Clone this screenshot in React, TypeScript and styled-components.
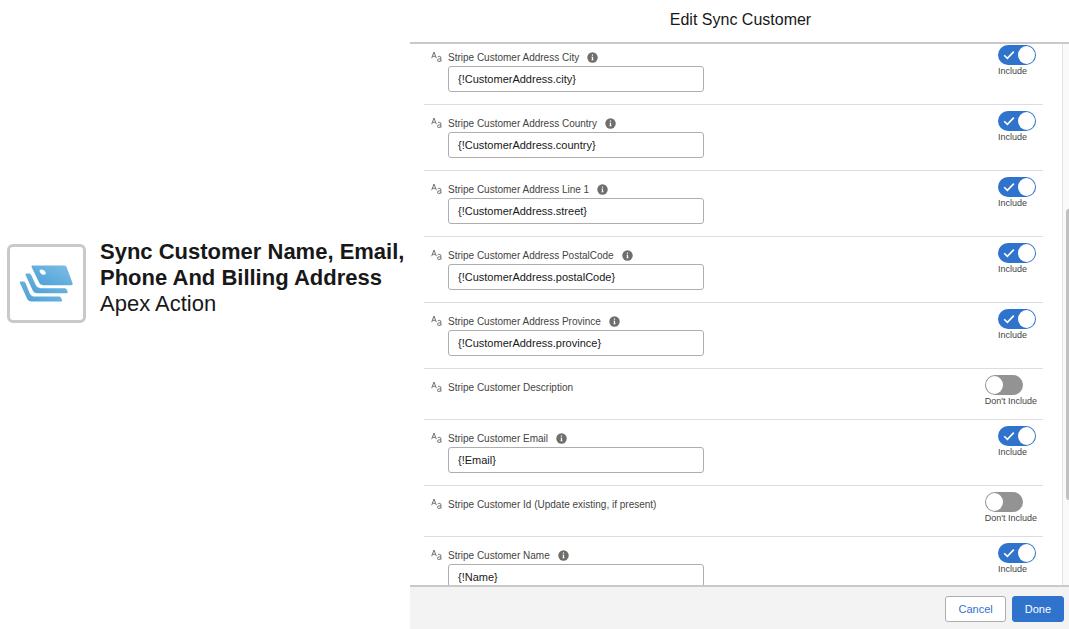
import React from "react";
import styled, { createGlobalStyle } from "styled-components";

const GlobalStyle = createGlobalStyle`
  *, *::before, *::after { box-sizing: border-box; }
  body {
    margin: 0;
    background: #ffffff;
    color: #181818;
    font-family: "Liberation Sans", Arial, sans-serif;
  }
`;

const Page = styled.div`
  display: grid;
  grid-template-columns: minmax(0, 410fr) minmax(0, 659fr);
  height: 100vh;
`;

const Summary = styled.aside`
  display: flex;
  align-items: center;
  gap: 14px;
  padding: 0 0 62px 7px;
`;

const ActionIcon = styled.div`
  display: flex;
  flex: none;
  align-items: center;
  justify-content: center;
  width: 79px;
  height: 79px;
  border: 3px solid #c9c9c9;
  border-radius: 6px;
`;

const SummaryText = styled.div`
  padding-bottom: 12px;
  font-size: 22px;
  line-height: 26px;
  white-space: nowrap;
`;

const ActionName = styled.h1`
  margin: 0;
  font-size: inherit;
  font-weight: 700;
`;

const ActionKind = styled.p`
  margin: 0;
`;

const Panel = styled.section`
  display: flex;
  flex-direction: column;
  min-height: 0;
`;

const PanelHeader = styled.header`
  flex: none;
  padding: 10px 0 12px;
  border-bottom: 2px solid #c9c9c9;
  text-align: center;
`;

const PanelTitle = styled.h2`
  margin: 0;
  padding-left: 2px;
  font-size: 16px;
  font-weight: 400;
  line-height: 20px;
`;

const PanelBody = styled.div`
  display: flex;
  flex: 1;
  min-height: 0;
  overflow: hidden;
`;

const ParameterList = styled.ul`
  flex: 1;
  min-width: 0;
  margin: 0;
  padding: 0 19px 0 14px;
  list-style: none;
`;

const Row = styled.li`
  display: flex;
  align-items: flex-start;
  justify-content: space-between;
  padding: 6px 6px 12px 7px;
  border-bottom: 1px solid #dddddd;

  &:first-child {
    padding-top: 1px;
  }
`;

const Field = styled.div`
  display: grid;
  grid-template-columns: 17px 256px;
  padding-top: 4px;
`;

const LabelLine = styled.div`
  display: flex;
  align-items: center;
  gap: 8px;
  height: 17px;
  color: #444444;
  font-size: 10px;
  line-height: 16px;
  white-space: nowrap;
`;

const TextInput = styled.input`
  grid-column: 2;
  width: 100%;
  height: 26px;
  padding: 0 9px;
  border: 1px solid #aeaeae;
  border-radius: 3px;
  background: #ffffff;
  color: #181818;
  font-family: inherit;
  font-size: 11px;
`;

const ToggleLabel = styled.label`
  display: flex;
  flex-direction: column;
  min-width: 39px;
  color: #444444;
  font-size: 9px;
  line-height: 12px;
  white-space: nowrap;
`;

const ToggleTrack = styled.span`
  position: relative;
  width: 38px;
  height: 20px;
`;

const ToggleInput = styled.input`
  display: flex;
  align-items: center;
  appearance: none;
  width: 38px;
  height: 20px;
  margin: 0;
  padding: 0 1px;
  border-radius: 10px;
  background: #939393;
  cursor: pointer;

  &::before {
    content: "";
    width: 17px;
    height: 18px;
    border-radius: 50%;
    background: #ffffff;
  }

  &:checked {
    justify-content: flex-end;
    background: #2f73cd;
  }

  & + svg {
    display: none;
  }

  &:checked + svg {
    display: block;
  }
`;

const CheckMark = styled.svg`
  position: absolute;
  top: 5px;
  left: 5px;
  pointer-events: none;
`;

const ScrollTrack = styled.div`
  display: grid;
  flex: none;
  grid-template-rows: 165fr 292fr 85fr;
  width: 7px;
  padding-left: 3px;
  border-left: 1px solid #e4e4e4;
  background: #fafafa;
`;

const ScrollThumb = styled.div`
  grid-row: 2;
  border-radius: 3px 0 0 3px;
  background: #c1c1c1;
`;

const PanelFooter = styled.footer`
  display: flex;
  flex: none;
  justify-content: flex-end;
  gap: 6px;
  padding: 9px 5px 7px;
  border-top: 2px solid #c9c9c9;
  background: #f3f3f3;
`;

const Button = styled.button<{ $primary?: boolean }>`
  height: 26px;
  padding: 0 12px;
  border: 1px solid ${(p) => (p.$primary ? "#2f73cd" : "#aeaeae")};
  border-radius: 3px;
  background: ${(p) => (p.$primary ? "#2f73cd" : "#ffffff")};
  color: ${(p) => (p.$primary ? "#ffffff" : "#2f73cd")};
  font-family: inherit;
  font-size: 11px;
  cursor: pointer;
`;

function CardsLogo() {
  return (
    <svg width="53" height="37" viewBox="61 104 159 110" aria-hidden="true">
      <defs>
        <linearGradient id="cards" x1="0" y1="1" x2="1" y2="0">
          <stop offset="0" stopColor="#4a9fd8" />
          <stop offset="1" stopColor="#80bfe4" />
        </linearGradient>
      </defs>
      <g fill="url(#cards)">
        <path
          fillRule="evenodd"
          d="M98 105H194Q199 105 201 110L219 159Q220 164 215 164H132Q122 164 118 155L96 110Q94 105 98 105ZM120 122C121 127 126 133 132 133C138 133 140 129 137 124C134 119 129 116 124 117C121 118 119 119 120 122Z"
        />
        <path d="M80 129H89Q93 129 95 134L108 163Q113 173 123 173H195Q199 173 201 177L204 184Q205 188 201 188H113Q103 188 99 179L78 134Q76 129 80 129Z" />
        <path d="M63 153H72Q76 153 78 158L90 188Q95 198 105 198H178Q182 198 184 202L187 209Q188 213 184 213H96Q86 213 82 204L61 158Q59 153 63 153Z" />
      </g>
    </svg>
  );
}

function TextTypeIcon() {
  return (
    <svg width="12" height="14" viewBox="0 0 12 14" fill="none" stroke="#747474" aria-hidden="true">
      <path d="M0.7 9.2L3 3L5.3 9.2M1.4 7.3H4.6" />
      <path d="M6.7 8.2Q7.1 7.3 8.2 7.3Q9.9 7.3 9.9 8.9V12.7M9.9 9.8H8.3Q6.5 9.9 6.5 11.2Q6.5 12.5 7.8 12.5Q9.3 12.5 9.9 11.2" />
    </svg>
  );
}

function InfoIcon() {
  return (
    <svg width="11" height="11" viewBox="0 0 11 11" role="img" aria-label="Help">
      <circle cx="5.5" cy="5.5" r="5.2" fill="#706e6b" />
      <path d="M4.9 2.6H6.1V3.8H4.9ZM4.5 4.7H6.1V7.4H6.6V8.2H4.4V7.4H4.9V5.4H4.5Z" fill="#ffffff" />
    </svg>
  );
}

type Parameter = { id: string; label: string; value?: string };

const parameters: Parameter[] = [
  { id: "city", label: "Stripe Customer Address City", value: "{!CustomerAddress.city}" },
  { id: "country", label: "Stripe Customer Address Country", value: "{!CustomerAddress.country}" },
  { id: "line1", label: "Stripe Customer Address Line 1", value: "{!CustomerAddress.street}" },
  { id: "postal", label: "Stripe Customer Address PostalCode", value: "{!CustomerAddress.postalCode}" },
  { id: "province", label: "Stripe Customer Address Province", value: "{!CustomerAddress.province}" },
  { id: "description", label: "Stripe Customer Description" },
  { id: "email", label: "Stripe Customer Email", value: "{!Email}" },
  { id: "customer-id", label: "Stripe Customer Id (Update existing, if present)" },
  { id: "name", label: "Stripe Customer Name", value: "{!Name}" },
];

function ParameterRow({ id, label, value }: Parameter) {
  const included = value !== undefined;
  return (
    <Row>
      <Field>
        <TextTypeIcon />
        <LabelLine>
          <label htmlFor={included ? id : `${id}-include`}>{label}</label>
          {included && <InfoIcon />}
        </LabelLine>
        {included && <TextInput id={id} type="text" defaultValue={value} />}
      </Field>
      <ToggleLabel>
        <ToggleTrack>
          <ToggleInput id={`${id}-include`} type="checkbox" defaultChecked={included} />
          <CheckMark width="12" height="10" viewBox="0 0 12 10" fill="none" stroke="#ffffff" strokeWidth="1.6">
            <path d="M1.2 5.2L4.4 8.4L10.8 1.6" />
          </CheckMark>
        </ToggleTrack>
        {included ? "Include" : "Don't Include"}
      </ToggleLabel>
    </Row>
  );
}

export default function App() {
  return (
    <>
      <GlobalStyle />
      <Page>
        <Summary>
          <ActionIcon>
            <CardsLogo />
          </ActionIcon>
          <SummaryText>
            <ActionName>
              Sync Customer Name, Email,
              <br />
              Phone And Billing Address
            </ActionName>
            <ActionKind>Apex Action</ActionKind>
          </SummaryText>
        </Summary>
        <Panel>
          <PanelHeader>
            <PanelTitle>Edit Sync Customer</PanelTitle>
          </PanelHeader>
          <PanelBody>
            <ParameterList>
              {parameters.map((parameter) => (
                <ParameterRow key={parameter.id} {...parameter} />
              ))}
            </ParameterList>
            <ScrollTrack>
              <ScrollThumb />
            </ScrollTrack>
          </PanelBody>
          <PanelFooter>
            <Button type="button">Cancel</Button>
            <Button type="button" $primary>
              Done
            </Button>
          </PanelFooter>
        </Panel>
      </Page>
    </>
  );
}
